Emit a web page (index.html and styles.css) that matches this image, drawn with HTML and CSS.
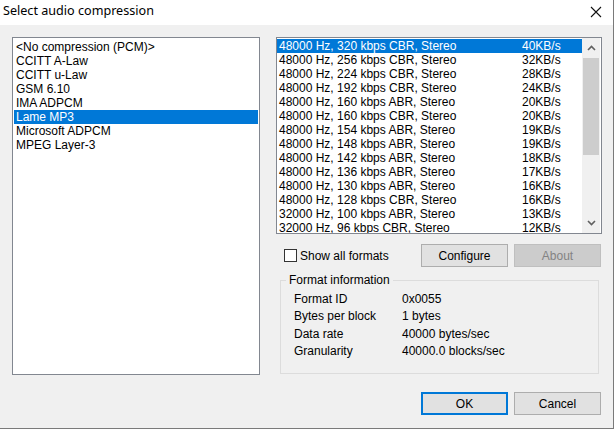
FILE: index.html
```html
<!DOCTYPE html>
<html>
<head>
	<title>Select audio compression</title>
	<link rel="stylesheet" href="styles.css">
</head>
<body>
	<div class="window">
		<div class="titlebar">
			<span class="title">Select audio compression</span>
			<svg class="close" width="12" height="12" viewBox="0 0 12 12">
				<path d="M1 1 L11 11 M11 1 L1 11" stroke="#111" stroke-width="1.1" fill="none"/>
			</svg>
		</div>
		<div class="content">
			<div class="codec-list">
				<div class="item">&lt;No compression (PCM)&gt;</div>
				<div class="item">CCITT A-Law</div>
				<div class="item">CCITT u-Law</div>
				<div class="item">GSM 6.10</div>
				<div class="item">IMA ADPCM</div>
				<div class="item selected">Lame MP3</div>
				<div class="item">Microsoft ADPCM</div>
				<div class="item">MPEG Layer-3</div>
			</div>
			<div class="right-col">
				<div class="format-list">
					<div class="rows">
						<div class="row selected"><span class="desc">48000 Hz, 320 kbps CBR, Stereo</span><span>40KB/s</span></div>
						<div class="row"><span class="desc">48000 Hz, 256 kbps CBR, Stereo</span><span>32KB/s</span></div>
						<div class="row"><span class="desc">48000 Hz, 224 kbps CBR, Stereo</span><span>28KB/s</span></div>
						<div class="row"><span class="desc">48000 Hz, 192 kbps CBR, Stereo</span><span>24KB/s</span></div>
						<div class="row"><span class="desc">48000 Hz, 160 kbps ABR, Stereo</span><span>20KB/s</span></div>
						<div class="row"><span class="desc">48000 Hz, 160 kbps CBR, Stereo</span><span>20KB/s</span></div>
						<div class="row"><span class="desc">48000 Hz, 154 kbps ABR, Stereo</span><span>19KB/s</span></div>
						<div class="row"><span class="desc">48000 Hz, 148 kbps ABR, Stereo</span><span>19KB/s</span></div>
						<div class="row"><span class="desc">48000 Hz, 142 kbps ABR, Stereo</span><span>18KB/s</span></div>
						<div class="row"><span class="desc">48000 Hz, 136 kbps ABR, Stereo</span><span>17KB/s</span></div>
						<div class="row"><span class="desc">48000 Hz, 130 kbps ABR, Stereo</span><span>16KB/s</span></div>
						<div class="row"><span class="desc">48000 Hz, 128 kbps CBR, Stereo</span><span>16KB/s</span></div>
						<div class="row"><span class="desc">32000 Hz, 100 kbps ABR, Stereo</span><span>13KB/s</span></div>
						<div class="row"><span class="desc">32000 Hz, 96 kbps CBR, Stereo</span><span>12KB/s</span></div>
					</div>
					<div class="scrollbar">
						<div class="arrow">
							<svg width="9" height="6" viewBox="0 0 9 6"><path d="M1 5 L4.5 1.5 L8 5" stroke="#606060" stroke-width="1.6" fill="none"/></svg>
						</div>
						<div class="thumb"></div>
						<div class="track"></div>
						<div class="arrow">
							<svg width="9" height="6" viewBox="0 0 9 6"><path d="M1 1 L4.5 4.5 L8 1" stroke="#606060" stroke-width="1.6" fill="none"/></svg>
						</div>
					</div>
				</div>
				<div class="options">
					<label class="check"><span class="box"></span>Show all formats</label>
					<button class="btn">Configure</button>
					<button class="btn" disabled>About</button>
				</div>
				<fieldset class="group">
					<legend>Format information</legend>
					<div class="info"><span class="key">Format ID</span><span>0x0055</span></div>
					<div class="info"><span class="key">Bytes per block</span><span>1 bytes</span></div>
					<div class="info"><span class="key">Data rate</span><span>40000 bytes/sec</span></div>
					<div class="info"><span class="key">Granularity</span><span>40000.0 blocks/sec</span></div>
				</fieldset>
				<div class="actions">
					<button class="btn default">OK</button>
					<button class="btn">Cancel</button>
				</div>
			</div>
		</div>
	</div>
</body>
</html>
```

FILE: styles.css
```css
body {
	margin: 0;
	background-color: #FFFFFF;
	font-family: "Liberation Sans", Arial, sans-serif;
	font-size: 12px;
	color: #000000;
}

.window {
	width: 613px;
	height: 428px;
	border-right: 1px solid #7A7A7A;
	border-bottom: 1px solid #7A7A7A;
	background-color: #F0F0F0;
}

.titlebar {
	height: 25px;
	background-color: #FFFFFF;
	display: flex;
	align-items: center;
	justify-content: space-between;
	padding: 0 11px 0 3px;
	box-sizing: border-box;
}

.title {
	font-family: "Noto Sans", sans-serif;
	font-size: 12.6px;
	margin-top: -4px;
}

.close {
	margin-top: -2px;
}

.content {
	display: flex;
	padding: 12px 0 0 12px;
}

.codec-list {
	width: 248px;
	height: 338px;
	box-sizing: border-box;
	border: 1px solid #828790;
	background-color: #FFFFFF;
	padding: 2px 1px 1px;
	margin-right: 16px;
}

.item {
	height: 14px;
	line-height: 14px;
	padding-left: 2px;
	white-space: nowrap;
}

.selected {
	background-color: #0078D7;
	color: #FFFFFF;
}

.right-col {
	width: 326px;
	display: flex;
	flex-direction: column;
}

.format-list {
	height: 197px;
	box-sizing: border-box;
	border: 1px solid #828790;
	background-color: #FFFFFF;
	display: flex;
	padding: 1px 1px 0 0;
}

.rows {
	flex: 1;
	overflow: hidden;
}

.row {
	display: flex;
	height: 14px;
	line-height: 15px;
	padding-left: 2px;
	white-space: nowrap;
}

.desc {
	width: 243px;
}

.scrollbar {
	width: 18px;
	background-color: #F0F0F0;
	display: flex;
	flex-direction: column;
	margin-top: -1px;
}

.arrow {
	height: 20px;
	display: flex;
	align-items: center;
	justify-content: center;
}

.thumb {
	height: 97px;
	background-color: #CDCDCD;
	margin: 0 1px;
}

.track {
	flex: 1;
}

.options {
	display: flex;
	align-items: center;
	margin-top: 10px;
	height: 23px;
}

.check {
	display: flex;
	align-items: center;
	width: 137px;
	flex-shrink: 0;
	padding-left: 8px;
}

.box {
	width: 11px;
	height: 11px;
	border: 1px solid #333333;
	background-color: #FFFFFF;
	margin-right: 3px;
}

.btn {
	width: 87px;
	height: 23px;
	flex-shrink: 0;
	box-sizing: border-box;
	border: 1px solid #ADADAD;
	background-color: #E1E1E1;
	font-family: "Liberation Sans", Arial, sans-serif;
	font-size: 12px;
	color: #000000;
	padding: 0;
	margin-right: 6px;
}

.btn:last-child {
	margin-right: 0;
}

.btn:disabled {
	background-color: #CCCCCC;
	border-color: #BFBFBF;
	color: #838383;
}

.btn.default {
	border: 2px solid #0078D7;
}

.group {
	margin: 6px 3px 0 4px;
	border: 1px solid #DCDCDC;
	padding: 4px 0 0 0;
	height: 101px;
	box-sizing: border-box;
}

.group legend {
	padding: 0 3px;
	margin-left: 5px;
	line-height: 14px;
}

.info {
	display: flex;
	height: 17.4px;
	line-height: 17px;
	padding-left: 13px;
}

.key {
	width: 108px;
}

.actions {
	display: flex;
	margin-top: 18px;
	padding-left: 145px;
}
```
